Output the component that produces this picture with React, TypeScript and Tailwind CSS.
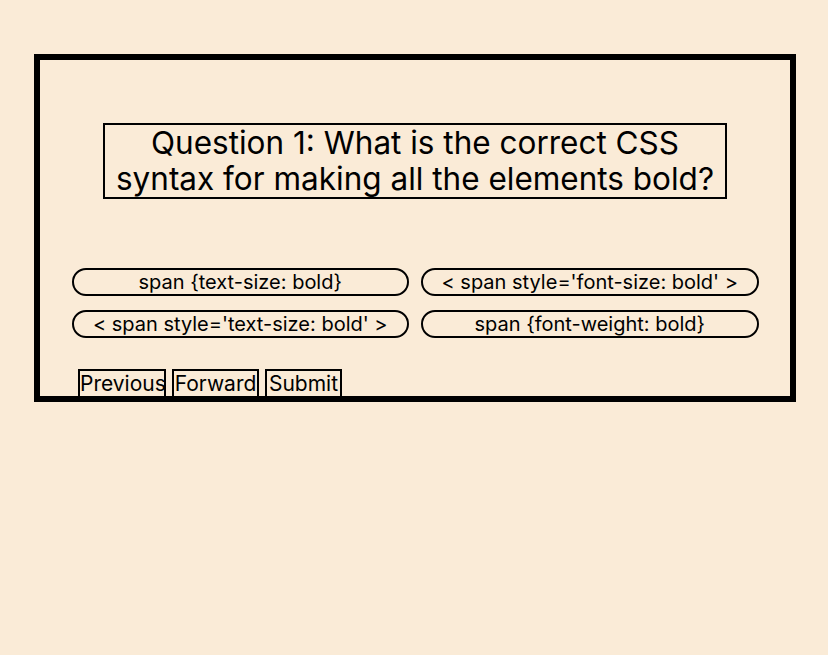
const answers = [
  "span {text-size: bold}",
  "< span style='font-size: bold' >",
  "< span style='text-size: bold' >",
  "span {font-weight: bold}",
];

const navButtons = [
  { label: "Previous", width: "w-[88px]" },
  { label: "Forward", width: "w-[87px]" },
  { label: "Submit", width: "w-[77px]" },
];

export default function App() {
  return (
    <div className="min-h-[655px] bg-[#faebd7] pt-[54px] font-['Inter',sans-serif] text-black">
      <div className="ml-[34px] h-[348px] w-[762px] border-[6px] border-black">
        {/* Question */}
        <div className="flex justify-center pt-[63px]">
          <h1 className="w-[624px] border-2 border-black text-center text-[31.5px] leading-[36px] font-normal">
            Question 1: What is the correct CSS
            <br />
            syntax for making all the elements bold?
          </h1>
        </div>

        {/* Answers */}
        <div className="mx-auto mt-[69px] grid w-[687px] grid-cols-2 gap-x-[12px] gap-y-[14px]">
          {answers.map((a) => (
            <button
              key={a}
              className="h-[28px] rounded-full border-2 border-black text-[20px] leading-none"
            >
              {a}
            </button>
          ))}
        </div>

        {/* Navigation */}
        <div className="mt-[31px] ml-[38px] flex gap-[6px]">
          {navButtons.map((b) => (
            <button
              key={b.label}
              className={`${b.width} h-[30px] border-2 border-black pb-[2px] text-[21px] leading-none`}
            >
              {b.label}
            </button>
          ))}
        </div>
      </div>
    </div>
  );
}
